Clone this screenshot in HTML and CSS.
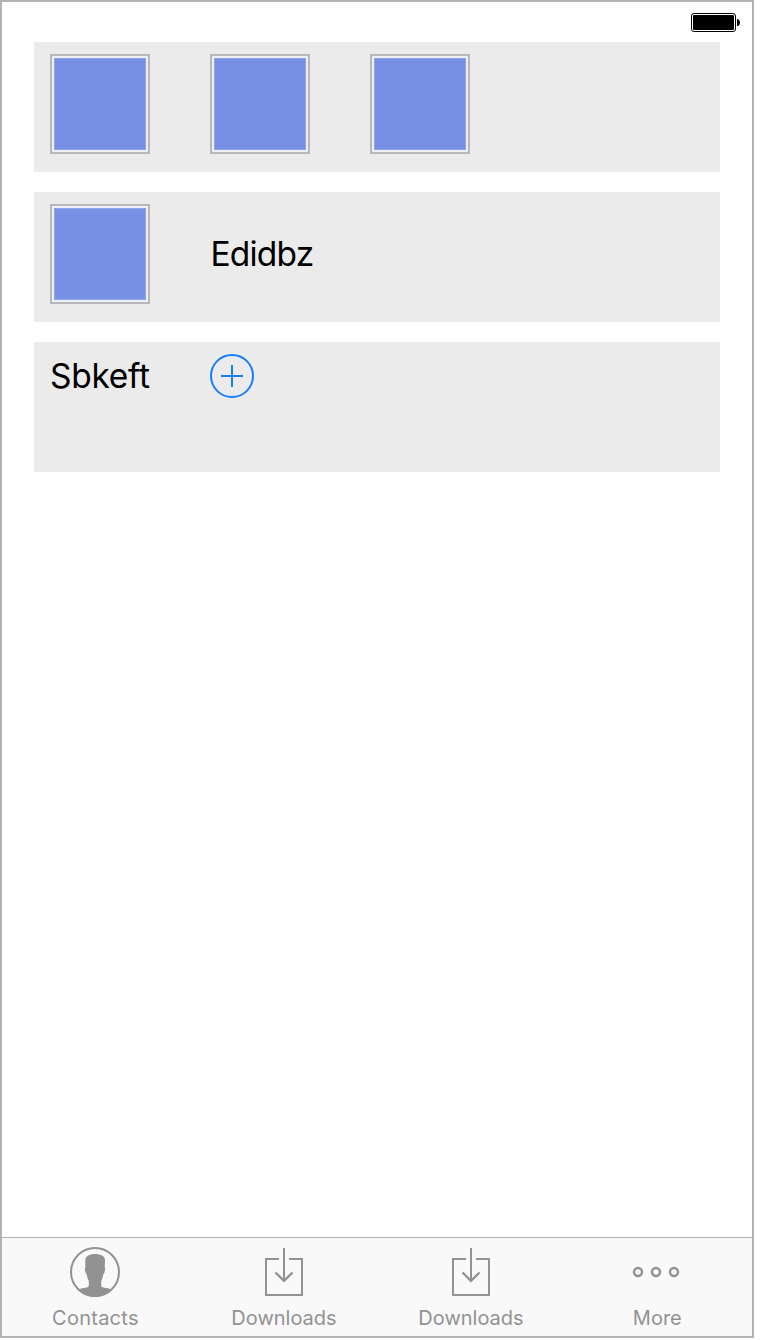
FILE: index.html
```html
<!DOCTYPE html>
<html lang="en">
<head>
<meta charset="utf-8">
<title>Contacts</title>
<link rel="stylesheet" href="styles.css">
</head>
<body>
<div class="screen">
  <header class="status-bar">
    <svg class="battery" width="50" height="20" viewBox="0 0 50 20">
      <rect x=".5" y=".5" width="44" height="18" rx="2.500" fill="#fff" stroke="#000"/>
      <rect x="2" y="2" width="41" height="15" rx="1" fill="#000"/>
      <path d="M46 6h1q2 1 2 3.500t-2 3.500h-1z" fill="#000"/>
    </svg>
  </header>
  <main class="rows">
    <section class="row">
      <div class="tile"></div>
      <div class="tile"></div>
      <div class="tile"></div>
    </section>
    <section class="row">
      <div class="tile"></div>
      <span class="label name">Edidbz</span>
    </section>
    <section class="row">
      <span class="label title">Sbkeft</span>
      <svg class="add" width="44" height="44" viewBox="0 0 44 44" fill="none" stroke="#147efb" stroke-width="2">
        <circle cx="22" cy="22" r="21"/>
        <path d="M22 11v22M11 22h22"/>
      </svg>
    </section>
  </main>
  <nav class="tabs">
    <div class="tab">
      <svg width="50" height="50" viewBox="0 0 50 50">
        <circle cx="25" cy="25" r="24" fill="none" stroke="#929292" stroke-width="2"/>
        <path d="M15.300 13C15.300 9.200 19.500 7 25 7s10 2 10 6c0 3-.2 5.100-.3 7.500.7.300.5 2.500 0 4-.4 1.400-.8 2.200-1.400 2.700-.4 2.800-1.200 4.800-2.100 6.800v4.500c0 1.600 2.200 2.100 5.200 2.500 2.200.3 4 .9 5.600 2C37 47.500 31.500 50 25 50S13 47.500 8 43c1.600-1.100 3.400-1.700 5.600-2 3-.4 5.200-.9 5.200-2.500V34c-.9-2-1.700-4-2.100-6.800-.6-.5-1-1.300-1.400-2.700-.5-1.500-.6-3.700.1-4-.1-2.400-.1-4.500-.1-7.500z" fill="#929292"/>
      </svg>
      <span class="tab-label tab-label-contacts">Contacts</span>
    </div>
    <div class="tab">
      <svg width="50" height="50" viewBox="0 0 50 50" fill="none" stroke="#929292" stroke-width="2">
        <path d="M20 12H7v36h36V12H30M25 1v33"/>
        <path d="M16.500 25.500l8.500 8.300 8.500-8.300" stroke-width="2.400"/>
      </svg>
      <span class="tab-label tab-label-downloads">Downloads</span>
    </div>
    <div class="tab">
      <svg width="50" height="50" viewBox="0 0 50 50" fill="none" stroke="#929292" stroke-width="2">
        <path d="M20 12H7v36h36V12H30M25 1v33"/>
        <path d="M16.500 25.500l8.500 8.300 8.500-8.300" stroke-width="2.400"/>
      </svg>
      <span class="tab-label tab-label-downloads">Downloads</span>
    </div>
    <div class="tab">
      <svg width="50" height="50" viewBox="0 0 50 50" fill="none" stroke="#929292" stroke-width="2.400">
        <circle cx="6" cy="25" r="4"/>
        <circle cx="24" cy="25" r="4"/>
        <circle cx="42" cy="25" r="4"/>
      </svg>
      <span class="tab-label tab-label-more">More</span>
    </div>
  </nav>
</div>
</body>
</html>
```
FILE: styles.css
```css
body {
  margin: 0;
  background: #fff;
  font-family: Inter, "Liberation Sans", sans-serif;
}
.screen {
  box-sizing: border-box;
  width: 754px;
  height: 1338px;
  border: 2px solid #b3b3b3;
  display: flex;
  flex-direction: column;
}
.status-bar {
  box-sizing: border-box;
  height: 40px;
  padding: 11px 11px 0 0;
  display: flex;
  justify-content: flex-end;
  align-items: flex-start;
}
.battery { display: block; }
.rows {
  flex: 1;
  padding: 0 32px;
  display: flex;
  flex-direction: column;
  gap: 20px;
}
.row {
  box-sizing: border-box;
  height: 130px;
  padding: 12px 16px;
  background: #ebebeb;
  display: grid;
  grid-template-columns: repeat(3, 100px);
  column-gap: 60px;
  align-items: start;
}
.tile {
  box-sizing: border-box;
  width: 100px;
  height: 100px;
  border: 2px solid #b8b8b8;
  padding: 2px;
  background: #7790e3 content-box;
  box-shadow: inset 0 0 0 2px #edf0fa, inset 0 0 0 3px #8ea4ec;
}
.label {
  font-size: 33.5px;
  line-height: 44px;
  color: #000;
  white-space: nowrap;
}
.name { margin-top: 28px; padding-left: 0.5px; letter-spacing: -0.8px; }
.title { letter-spacing: -0.3px; }
.tabs {
  box-sizing: border-box;
  height: 99px;
  border-top: 1px solid #b3b3b3;
  background: #f9f9f9;
  padding-top: 9px;
  display: grid;
  grid-template-columns: 186px 192px 182px 190px;
}
.tab {
  display: flex;
  flex-direction: column;
  align-items: center;
}
.tab svg { display: block; }
.tab-label {
  margin-top: 9px;
  font-size: 20px;
  line-height: 24px;
  color: #929292;
}
.tab-label-contacts { padding-left: 0.8px; letter-spacing: 0.25px; }
.tab-label-downloads { letter-spacing: 0; }
.tab-label-more { padding-left: 0.6px; letter-spacing: 0; }
```
